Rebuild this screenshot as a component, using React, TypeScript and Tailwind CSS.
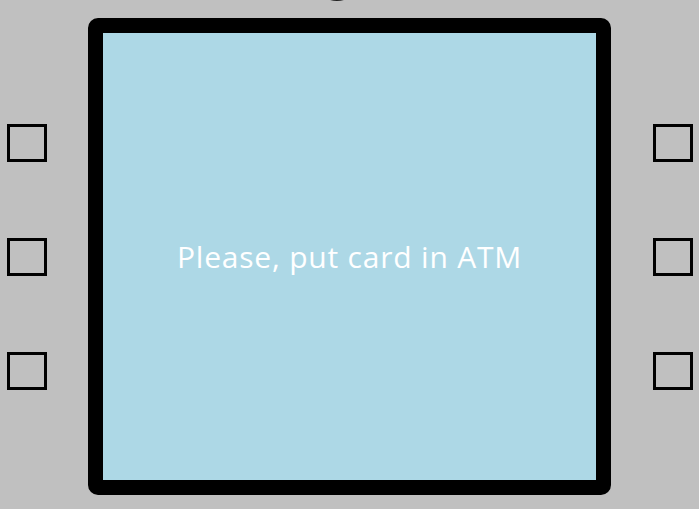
import React from "react";

const SideButton = () => (
  <button className="w-[40px] h-[38px] border-[3px] border-black bg-transparent" />
);

export default function App() {
  return (
    <div className="relative w-full h-[509px] overflow-hidden bg-[#c0c0c0] font-['Open_Sans',sans-serif]">
      {/* card slot */}
      <div className="absolute left-[314px] top-[-45px] w-[46px] h-[46px] rounded-full border-2 border-[#222]" />

      <div className="flex items-start pt-[18px] pl-[7px]">
        <div className="flex flex-col gap-[76px] pt-[106px]">
          <SideButton />
          <SideButton />
          <SideButton />
        </div>

        <div className="ml-[41px] w-[523px] h-[477px] border-[15px] border-black rounded-[10px] bg-[#add8e6] flex items-center justify-center">
          <p className="text-white text-[30px] leading-none tracking-[0.8px]">
            Please, put card in ATM
          </p>
        </div>

        <div className="ml-[42px] flex flex-col gap-[76px] pt-[106px]">
          <SideButton />
          <SideButton />
          <SideButton />
        </div>
      </div>
    </div>
  );
}
